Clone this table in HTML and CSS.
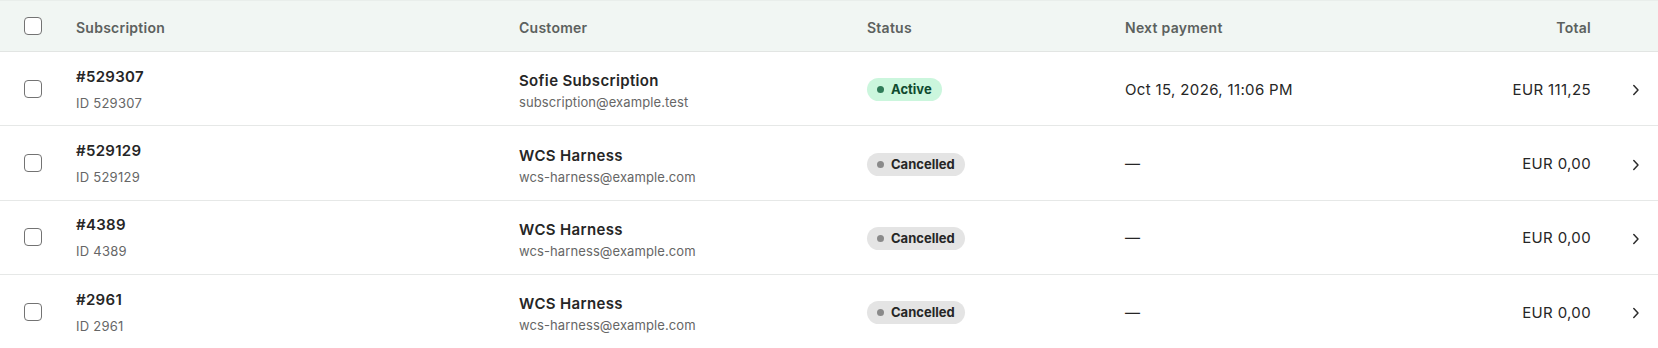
FILE: index.html
```html
<!DOCTYPE html>
<html lang="en">
<head>
<meta charset="utf-8">
<title>Subscriptions</title>
<link rel="stylesheet" href="styles.css">
</head>
<body>
<div class="table">
  <div class="row head">
    <div class="cell check"><span class="box"></span></div>
    <div class="cell">Subscription</div>
    <div class="cell">Customer</div>
    <div class="cell">Status</div>
    <div class="cell">Next payment</div>
    <div class="cell right">Total</div>
    <div class="cell"></div>
  </div>

  <div class="row">
    <div class="cell check"><span class="box"></span></div>
    <div class="cell stack sub"><span class="sub-num">#529307</span><span class="sub-id">ID 529307</span></div>
    <div class="cell stack cust"><span class="cust-name">Sofie Subscription</span><span class="cust-mail">subscription@example.test</span></div>
    <div class="cell shift"><span class="badge active"><i class="dot"></i>Active</span></div>
    <div class="cell text">Oct 15, 2026, 11:06 PM</div>
    <div class="cell text right">EUR 111,25</div>
    <div class="cell chev"><svg width="8" height="12" viewBox="0 0 8 12"><path d="M1.8 1.6 L6 6 L1.8 10.4" fill="none" stroke="#2b2b2b" stroke-width="1.5" stroke-linecap="round" stroke-linejoin="round"/></svg></div>
  </div>

  <div class="row">
    <div class="cell check"><span class="box"></span></div>
    <div class="cell stack sub"><span class="sub-num">#529129</span><span class="sub-id">ID 529129</span></div>
    <div class="cell stack cust"><span class="cust-name">WCS Harness</span><span class="cust-mail">wcs-harness@example.com</span></div>
    <div class="cell shift"><span class="badge cancelled"><i class="dot"></i>Cancelled</span></div>
    <div class="cell text">—</div>
    <div class="cell text right">EUR 0,00</div>
    <div class="cell chev"><svg width="8" height="12" viewBox="0 0 8 12"><path d="M1.8 1.6 L6 6 L1.8 10.4" fill="none" stroke="#2b2b2b" stroke-width="1.5" stroke-linecap="round" stroke-linejoin="round"/></svg></div>
  </div>

  <div class="row">
    <div class="cell check"><span class="box"></span></div>
    <div class="cell stack sub"><span class="sub-num">#4389</span><span class="sub-id">ID 4389</span></div>
    <div class="cell stack cust"><span class="cust-name">WCS Harness</span><span class="cust-mail">wcs-harness@example.com</span></div>
    <div class="cell shift"><span class="badge cancelled"><i class="dot"></i>Cancelled</span></div>
    <div class="cell text">—</div>
    <div class="cell text right">EUR 0,00</div>
    <div class="cell chev"><svg width="8" height="12" viewBox="0 0 8 12"><path d="M1.8 1.6 L6 6 L1.8 10.4" fill="none" stroke="#2b2b2b" stroke-width="1.5" stroke-linecap="round" stroke-linejoin="round"/></svg></div>
  </div>

  <div class="row">
    <div class="cell check"><span class="box"></span></div>
    <div class="cell stack sub"><span class="sub-num">#2961</span><span class="sub-id">ID 2961</span></div>
    <div class="cell stack cust"><span class="cust-name">WCS Harness</span><span class="cust-mail">wcs-harness@example.com</span></div>
    <div class="cell shift"><span class="badge cancelled"><i class="dot"></i>Cancelled</span></div>
    <div class="cell text">—</div>
    <div class="cell text right">EUR 0,00</div>
    <div class="cell chev"><svg width="8" height="12" viewBox="0 0 8 12"><path d="M1.8 1.6 L6 6 L1.8 10.4" fill="none" stroke="#2b2b2b" stroke-width="1.5" stroke-linecap="round" stroke-linejoin="round"/></svg></div>
  </div>
</div>
</body>
</html>
```

FILE: styles.css
```css
html, body {
  margin: 0;
  padding: 0;
  background: #ffffff;
}

body {
  font-family: Inter, "Noto Sans", "Liberation Sans", sans-serif;
  color: #262626;
  width: 1658px;
  overflow: hidden;
}

.table {
  display: flex;
  flex-direction: column;
}

.row {
  display: grid;
  grid-template-columns: 76px 443px 348px 258px 250px 216px 67px;
  align-items: center;
  height: 74.4px;
  box-sizing: border-box;
  border-bottom: 1px solid #e6e8e7;
}

.row.head {
  height: 52px;
  background: #f1f6f3;
  border-top: 1px solid #e9eeeb;
  border-bottom: 1px solid #e2e5e3;
  font-size: 14px;
  line-height: 20px;
  font-weight: 600;
  letter-spacing: 0.25px;
  color: #5c615e;
}

.row.head .cell {
  padding-top: 3px;
}

.row.head .cell.check {
  padding-top: 0;
}

.cell {
  min-width: 0;
}

.check {
  display: flex;
  padding-left: 24px;
}

.box {
  display: block;
  width: 18px;
  height: 18px;
  box-sizing: border-box;
  border: 1.5px solid #737373;
  border-radius: 4px;
  background: #ffffff;
}

.stack {
  display: flex;
  flex-direction: column;
  padding-top: 2px;
}

.sub-num {
  font-size: 15px;
  line-height: 18px;
  font-weight: 600;
  letter-spacing: 0.3px;
  color: #262626;
  margin-bottom: 8px;
}

.sub-id {
  font-size: 13px;
  line-height: 18px;
  letter-spacing: 0.25px;
  color: #666666;
}

.cust {
  padding-top: 3px;
}

.cust-name {
  font-size: 15px;
  line-height: 24px;
  font-weight: 600;
  letter-spacing: 0.35px;
  color: #262626;
}

.cust-mail {
  font-size: 13px;
  line-height: 18px;
  letter-spacing: 0.1px;
  color: #666666;
}

.text {
  font-size: 15px;
  line-height: 20px;
  letter-spacing: 0.35px;
  color: #262626;
  padding-top: 2px;
}

.shift {
  padding-top: 2px;
}

.right {
  text-align: right;
}

.badge {
  display: inline-flex;
  align-items: center;
  gap: 7px;
  height: 23px;
  padding: 0 10px;
  border-radius: 12px;
  font-size: 13px;
  font-weight: 700;
  line-height: 23px;
  vertical-align: middle;
}

.badge .dot {
  display: block;
  width: 7px;
  height: 7px;
  border-radius: 50%;
}

.badge.active {
  background: #cbf6dd;
  color: #0f4a2f;
}

.badge.active .dot {
  background: #2f7b58;
}

.badge.cancelled {
  background: #e4e4e4;
  color: #262626;
}

.badge.cancelled .dot {
  background: #8a8a8a;
}

.chev {
  display: flex;
  align-items: center;
  padding-left: 41px;
  padding-top: 3px;
}

.chev svg {
  display: block;
}
```
